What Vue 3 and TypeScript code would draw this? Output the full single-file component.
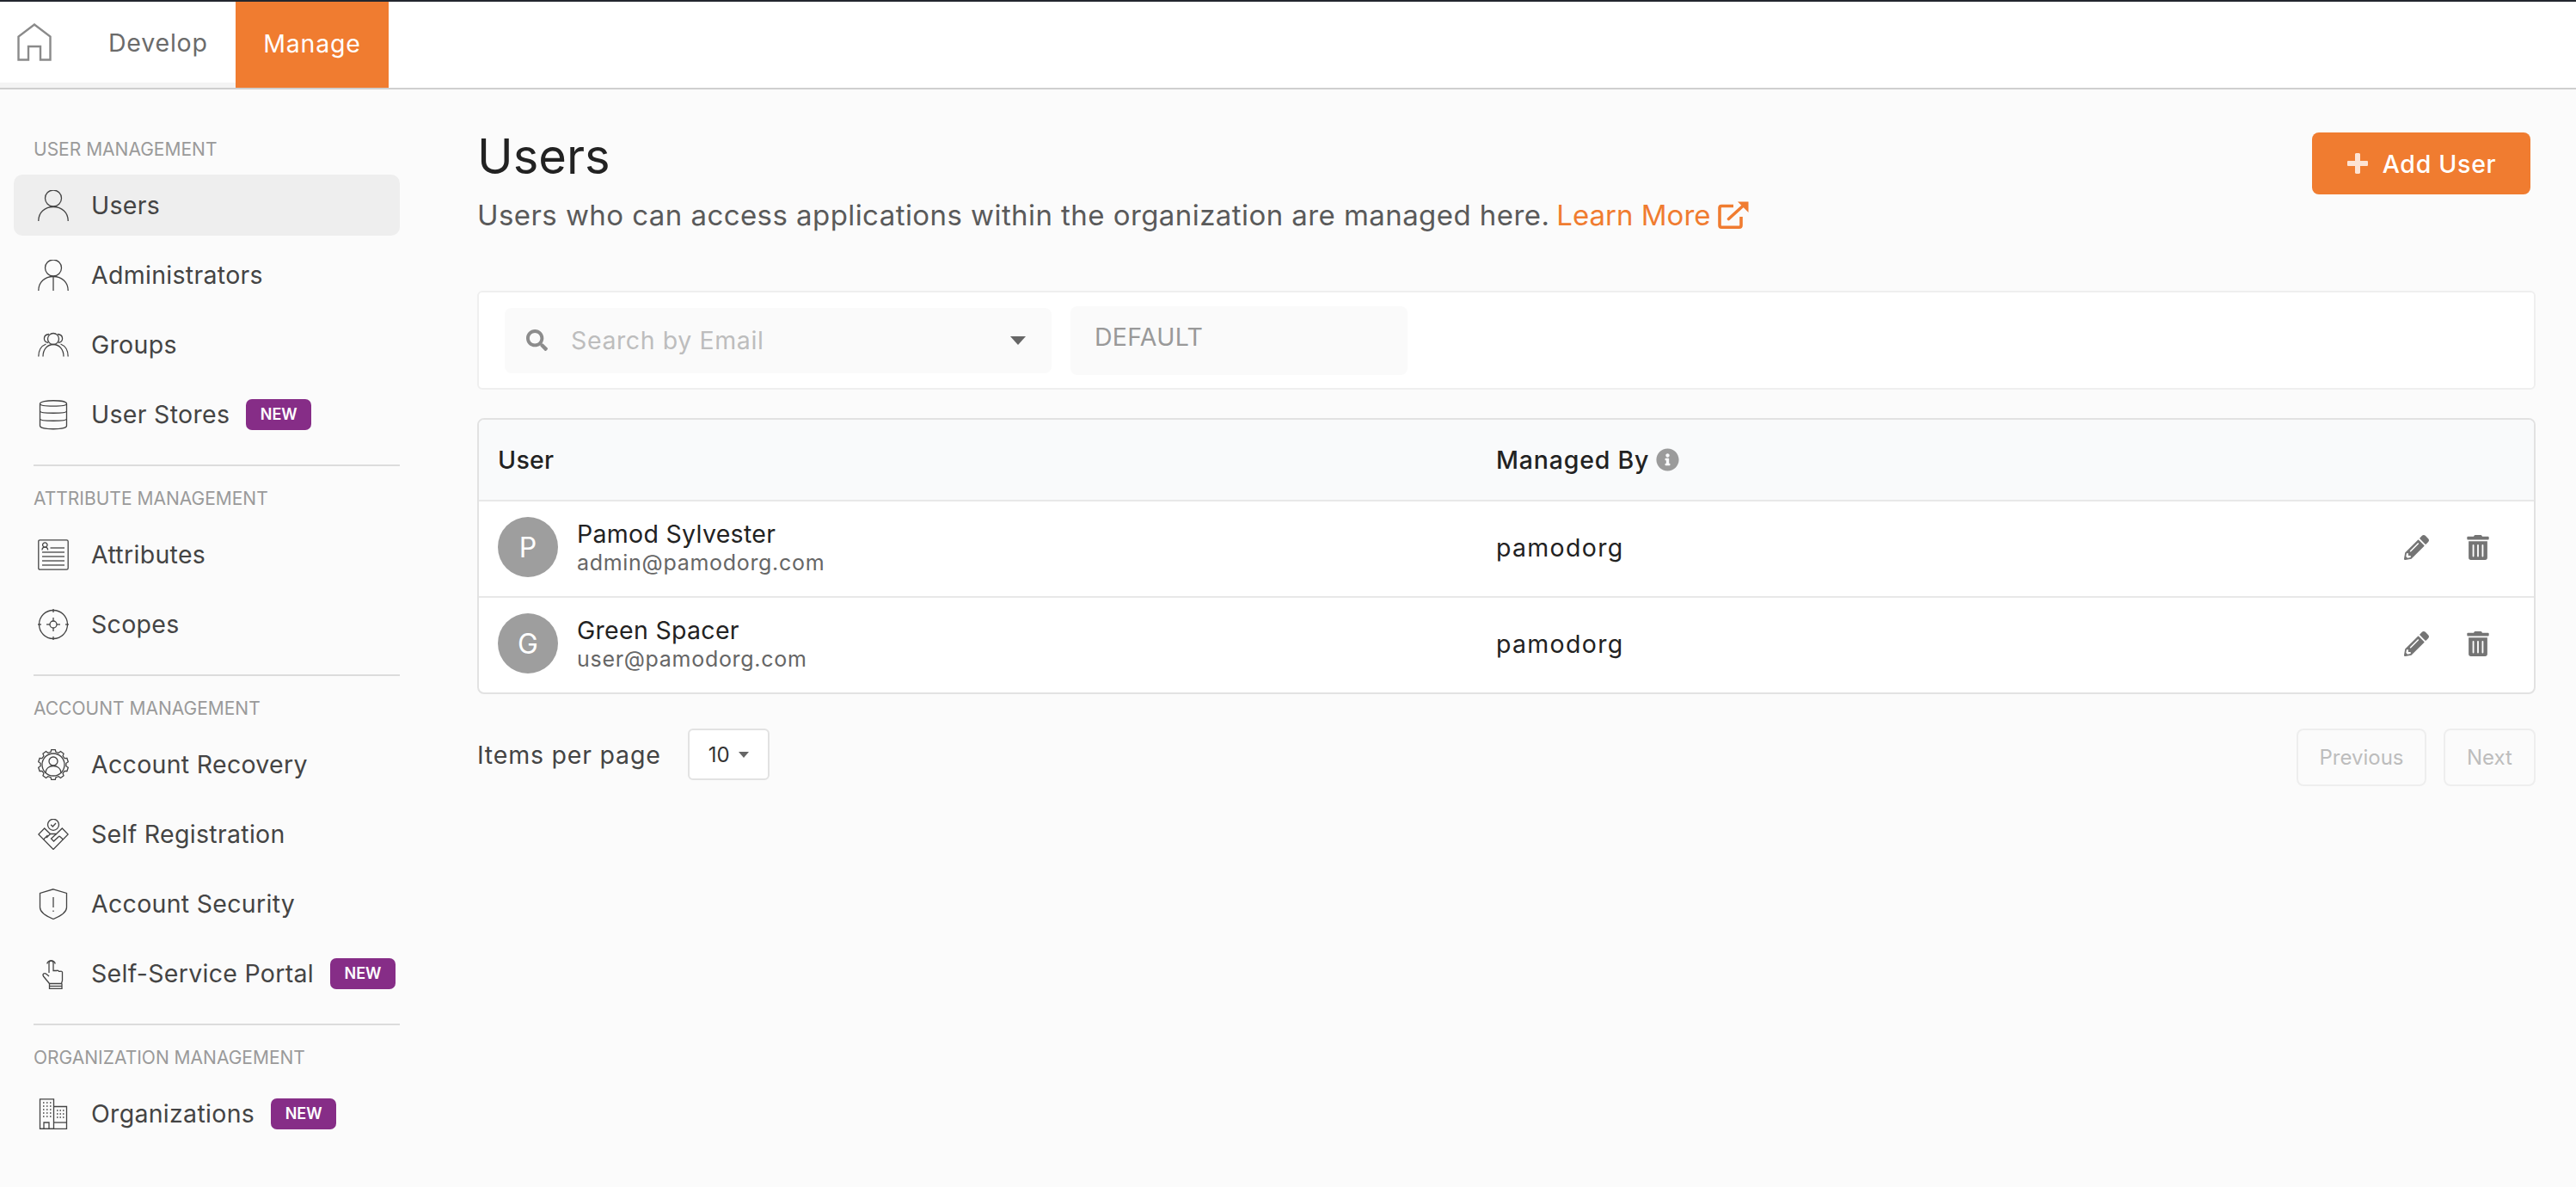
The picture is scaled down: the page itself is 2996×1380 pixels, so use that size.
<script setup lang="ts">
interface NavItem {
  label: string
  icon: string[]
  isNew?: boolean
  active?: boolean
}

interface NavSection {
  title: string
  items: NavItem[]
}

interface UserRow {
  name: string
  email: string
  org: string
}

// cog outline for the account recovery icon
const cogPath = (teeth: number, outer: number, inner: number): string => {
  const step = (Math.PI * 2) / teeth
  const points: string[] = []
  for (let i = 0; i < teeth; i++) {
    const a = i * step - Math.PI / 2
    const offsets: [number, number][] = [
      [-0.32, inner],
      [-0.2, outer],
      [0.2, outer],
      [0.32, inner],
    ]
    for (const [off, r] of offsets) {
      const x = 18 + Math.cos(a + off * step) * r
      const y = 18 + Math.sin(a + off * step) * r
      points.push(`${x.toFixed(2)} ${y.toFixed(2)}`)
    }
  }
  return `M${points.join('L')}Z`
}

const sections: NavSection[] = [
  {
    title: 'USER MANAGEMENT',
    items: [
      {
        label: 'Users',
        active: true,
        icon: ['M27.5 9.5a9.5 9.5 0 1 1-19 0a9.5 9.5 0 1 1 19 0z', 'M.8 36C.8 26 8 19.5 18 19.5S35.2 26 35.2 36'],
      },
      {
        label: 'Administrators',
        icon: ['M27.5 9.5a9.5 9.5 0 1 1-19 0a9.5 9.5 0 1 1 19 0z', 'M.8 36C.8 26 8 19.5 18 19.5S35.2 26 35.2 36', 'M18 19.5V36'],
      },
      {
        label: 'Groups',
        icon: [
          'M24.5 11a6.5 6.5 0 1 1-13 0a6.5 6.5 0 1 1 13 0z',
          'M12 15.5C5.5 14 6 6 13 5.5',
          'M24 15.5C30.5 14 30 6 23 5.5',
          'M6 31.5C6 23 11 17.5 18 17.5S30 23 30 31.5',
          'M.8 31.5C.8 24 4.5 19 9.5 17',
          'M35.2 31.5C35.2 24 31.5 19 26.5 17',
        ],
      },
      {
        label: 'User Stores',
        isNew: true,
        icon: [
          'M2.5 5.5C2.5 .5 33.5 .5 33.5 5.5V31C33.5 36 2.5 36 2.5 31Z',
          'M2.5 5.5C2.5 9 33.5 9 33.5 5.5',
          'M2.5 14C2.5 17 33.5 17 33.5 14',
          'M2.5 23C2.5 26 33.5 26 33.5 23',
        ],
      },
    ],
  },
  {
    title: 'ATTRIBUTE MANAGEMENT',
    items: [
      {
        label: 'Attributes',
        icon: [
          'M2.5.8H33.5Q35.2.8 35.2 2.5V33.5Q35.2 35.2 33.5 35.2H2.5Q.8 35.2.8 33.5V2.5Q.8.8 2.5.8Z',
          'M11 6.5a2.7 2.7 0 1 1-5.4 0a2.7 2.7 0 1 1 5.4 0z',
          'M5 12.5C5 10 6.5 9.2 8.3 9.2S11.6 10 11.6 12.5',
          'M14.5 10H31',
          'M5 15H31',
          'M5 20H31',
          'M5 25H31',
          'M5 30H31',
        ],
      },
      {
        label: 'Scopes',
        icon: [
          'M34.5 18a16.5 16.5 0 1 1-33 0a16.5 16.5 0 1 1 33 0z',
          'M22 18a4 4 0 1 1-8 0a4 4 0 1 1 8 0z',
          'M18 0V4',
          'M18 32V36',
          'M0 18H4',
          'M32 18H36',
          'M18 10V14',
          'M18 22V26',
          'M10 18H14',
          'M22 18H26',
        ],
      },
    ],
  },
  {
    title: 'ACCOUNT MANAGEMENT',
    items: [
      {
        label: 'Account Recovery',
        icon: [
          cogPath(10, 17.6, 15),
          'M31 18a13 13 0 1 1-26 0a13 13 0 1 1 26 0z',
          'M23 14a5 5 0 1 1-10 0a5 5 0 1 1 10 0z',
          'M9 27.5C9 22.5 13 19.5 18 19.5S27 22.5 27 27.5',
        ],
      },
      {
        label: 'Self Registration',
        icon: [
          'M24.5 6.8a6.5 6.5 0 1 1-13 0a6.5 6.5 0 1 1 13 0z',
          'M15.2 6.8L17.3 9L21 5',
          'M7.7 11L.8 18L18 35.5L35.2 18L28.3 11L21.5 17.5H14.5Z',
          'M14.5 17.5L10 22',
          'M21.5 17.5L15.5 23L18.5 26L25 20',
          'M6.5 24L11.5 19',
          'M29.5 24L25 20',
        ],
      },
      {
        label: 'Account Security',
        icon: [
          'M18 .8L33.5 5.5V22Q33.5 29 18 35.5Q2.5 29 2.5 22V5.5Z',
          'M18 10V22',
          'M18 25.5V27',
        ],
      },
      {
        label: 'Self-Service Portal',
        isNew: true,
        icon: [
          'M10.7 6.5a5 5 0 0 1 9.6 0',
          'M13 17V5.5a2.5 2.5 0 0 1 5 0V14.5H22a1.8 1.8 0 0 1 2.5 .8H26a1.8 1.8 0 0 1 2.5 1V26L27.5 29.5H13.5L6.5 21C5 18.5 7.5 16.5 10 18.5L13 21',
          'M13.5 29.5V35.5H28V29.5',
          'M13.5 32.5H28',
        ],
      },
    ],
  },
  {
    title: 'ORGANIZATION MANAGEMENT',
    items: [
      {
        label: 'Organizations',
        isNew: true,
        icon: [
          'M2.5 35.5V.8H18.5V35.5Z',
          'M18.5 9.5H33.5V35.5H2.5',
          'M7 35.5V28H13V35.5',
          'M18.5 28H33.5',
          'M6 5h1.5M10 5h1.5M14 5h1.5M6 9h1.5M10 9h1.5M14 9h1.5M6 13h1.5M10 13h1.5M14 13h1.5M6 17h1.5M10 17h1.5M14 17h1.5M6 21h1.5M10 21h1.5M14 21h1.5',
          'M22 14h1.5M25.5 14h1.5M29 14h1.5M22 18h1.5M25.5 18h1.5M29 18h1.5M22 22h1.5M25.5 22h1.5M29 22h1.5',
        ],
      },
    ],
  },
]

const users: UserRow[] = [
  { name: 'Pamod Sylvester', email: 'admin@pamodorg.com', org: 'pamodorg' },
  { name: 'Green Spacer', email: 'user@pamodorg.com', org: 'pamodorg' },
]
</script>

<template>
  <div class="page">
    <header class="topbar">
      <div class="tabs">
        <div class="home">
          <svg width="40" height="44" viewBox="0 0 40 44" fill="none" stroke="#8a8a8a" stroke-width="2.4">
            <path d="M1.5 42.5V15.5L20 1.5L38.5 15.5V42.5H27V27H13V42.5Z" />
          </svg>
        </div>
        <div class="tab">Develop</div>
      </div>
      <div class="tab tab-active">Manage</div>
    </header>

    <div class="body">
      <aside class="sidebar">
        <section v-for="section in sections" :key="section.title" class="nav-section">
          <div class="nav-title">{{ section.title }}</div>
          <div class="nav-items">
            <div v-for="item in section.items" :key="item.label" class="nav-item" :class="{ active: item.active }">
              <svg class="nav-icon" width="36" height="36" viewBox="0 0 36 36" fill="none" stroke="#444" stroke-width="1.3">
                <path v-for="d in item.icon" :key="d" :d="d" />
              </svg>
              <span>{{ item.label }}</span>
              <span v-if="item.isNew" class="badge">NEW</span>
            </div>
          </div>
        </section>
      </aside>

      <main class="main">
        <div class="page-head">
          <div>
            <h1>Users</h1>
            <p class="subtitle">
              Users who can access applications within the organization are managed here.
              <span class="link">Learn More</span>
              <svg width="36" height="32" viewBox="0 0 36 32" fill="none" stroke="#f07c30" stroke-width="3.6">
                <path d="M27 18V28Q27 30.2 24.8 30.2H4.2Q2 30.2 2 28V7.7Q2 5.5 4.2 5.5H18" />
                <path d="M12.5 20.5L29 5.5" stroke-linecap="round" />
                <path d="M23 .5H35.5V13Z" fill="#f07c30" stroke="none" />
              </svg>
            </p>
          </div>
          <button class="add-btn">
            <svg width="26" height="26" viewBox="0 0 26 26"><path fill="#fde3d4" d="M10 2a2 2 0 0 1 2-1h2a2 2 0 0 1 2 1v8h8a1 1 0 0 1 1 1v4a1 1 0 0 1-1 1h-8v8a2 2 0 0 1-2 1h-2a2 2 0 0 1-2-1v-8H2a1 1 0 0 1-1-1v-4a1 1 0 0 1 1-1h8z" /></svg>
            Add User
          </button>
        </div>

        <div class="filters">
          <div class="search">
            <svg width="25" height="25" viewBox="0 0 512 512"><path fill="#8c8c8c" d="M505 442.7L405.3 343c-4.5-4.5-10.6-7-17-7H372c27.6-35.3 44-79.7 44-128C416 93.1 322.9 0 208 0S0 93.1 0 208s93.1 208 208 208c48.3 0 92.7-16.4 128-44v16.3c0 6.4 2.5 12.5 7 17l99.7 99.7c9.4 9.4 24.6 9.4 33.9 0l28.3-28.3c9.4-9.4 9.4-24.6.1-34zM208 336c-70.7 0-128-57.2-128-128 0-70.7 57.2-128 128-128 70.7 0 128 57.2 128 128 0 70.7-57.2 128-128 128z" /></svg>
            <span class="placeholder">Search by Email</span>
            <span class="caret caret-search"></span>
          </div>
          <div class="scope-box">DEFAULT</div>
        </div>

        <div class="table">
          <div class="row row-head">
            <div class="col-user">User</div>
            <div class="col-org">
              Managed By
              <svg width="27" height="27" viewBox="0 0 512 512"><path fill="#9b9b9b" d="M256 8C119.043 8 8 119.083 8 256c0 136.997 111.043 248 248 248s248-111.003 248-248C504 119.083 392.957 8 256 8zm0 110c23.196 0 42 18.804 42 42s-18.804 42-42 42-42-18.804-42-42 18.804-42 42-42zm56 254c0 6.627-5.373 12-12 12h-88c-6.627 0-12-5.373-12-12v-24c0-6.627 5.373-12 12-12h12v-64h-12c-6.627 0-12-5.373-12-12v-24c0-6.627 5.373-12 12-12h64c6.627 0 12 5.373 12 12v100h12c6.627 0 12 5.373 12 12v24z" /></svg>
            </div>
          </div>
          <div v-for="user in users" :key="user.email" class="row">
            <div class="col-user user-cell">
              <div class="avatar">{{ user.name[0] }}</div>
              <div>
                <div class="user-name">{{ user.name }}</div>
                <div class="user-email">{{ user.email }}</div>
              </div>
            </div>
            <div class="col-org org-name">{{ user.org }}</div>
            <div class="actions">
              <svg width="29" height="29" viewBox="0 0 512 512"><path fill="#747474" d="M497.9 142.1l-46.1 46.1c-4.7 4.7-12.3 4.7-17 0l-111-111c-4.7-4.7-4.7-12.3 0-17l46.1-46.1c18.7-18.7 49.1-18.7 67.9 0l60.1 60.1c18.8 18.7 18.8 49.1 0 67.9zM284.2 99.8L21.6 362.4.4 483.9c-2.9 16.4 11.4 30.6 27.8 27.8l121.5-21.3 262.6-262.6c4.7-4.7 4.7-12.3 0-17l-111-111c-4.8-4.7-12.4-4.7-17.1 0zM124.1 339.9c-5.5-5.5-5.5-14.3 0-19.8l154-154c5.5-5.5 14.3-5.5 19.8 0s5.5 14.3 0 19.8l-154 154c-5.5 5.5-14.3 5.5-19.8 0zM88 424h48v36.3l-64.5 11.3-31.1-31.1L51.7 376H88v48z" /></svg>
              <svg width="26" height="29" viewBox="0 0 448 512"><path fill="#747474" d="M32 464a48 48 0 0 0 48 48h288a48 48 0 0 0 48-48V128H32zm272-256a16 16 0 0 1 32 0v224a16 16 0 0 1-32 0zm-96 0a16 16 0 0 1 32 0v224a16 16 0 0 1-32 0zm-96 0a16 16 0 0 1 32 0v224a16 16 0 0 1-32 0zM432 32H312l-9.4-18.7A24 24 0 0 0 281.1 0H166.8a23.72 23.72 0 0 0-21.4 13.3L136 32H16A16 16 0 0 0 0 48v32a16 16 0 0 0 16 16h416a16 16 0 0 0 16-16V48a16 16 0 0 0-16-16z" /></svg>
            </div>
          </div>
        </div>

        <div class="pager">
          <div class="per-page">
            <span>Items per page</span>
            <div class="per-select">10<span class="caret"></span></div>
          </div>
          <div class="pager-btns">
            <div class="pager-btn prev">Previous</div>
            <div class="pager-btn next">Next</div>
          </div>
        </div>
      </main>
    </div>
  </div>
</template>

<style>
html,
body {
  margin: 0;
  background: #fbfbfb;
}
</style>

<style scoped>
.page {
  width: 2996px;
  height: 1380px;
  overflow: hidden;
  background: #fbfbfb;
  color: #444;
  font-family: Inter, 'Noto Sans', sans-serif;
  font-size: 28.5px;
  letter-spacing: 0.3px;
}

.topbar {
  display: flex;
  height: 104px;
  box-sizing: border-box;
  background: #fff;
  border-top: 2px solid #23272e;
  border-bottom: 2px solid #cfcfcf;
}

.tabs {
  display: flex;
  align-items: center;
  width: 274px;
  box-sizing: border-box;
  padding-left: 20px;
  border-bottom: 6px solid #f4f4f4;
}

.home {
  display: flex;
  width: 106px;
}

.tab {
  color: #6b6b6b;
  letter-spacing: 0.8px;
}

.tab-active {
  display: flex;
  align-items: center;
  justify-content: center;
  width: 178px;
  height: 100px;
  box-sizing: border-box;
  padding-bottom: 3px;
  background: #f07c30;
  color: #fff;
}

.body {
  display: flex;
}

.sidebar {
  width: 490px;
  flex-shrink: 0;
  box-sizing: border-box;
  padding: 55px 25px 0 16px;
}

.nav-section {
  margin-bottom: 23px;
}

.nav-section:not(:last-child)::after {
  content: '';
  display: block;
  height: 2px;
  margin: 23px 0 0 23px;
  background: #dcdcdc;
}

.nav-title {
  height: 30px;
  line-height: 30px;
  margin-bottom: 14px;
  padding-left: 23px;
  font-size: 21px;
  letter-spacing: 0;
  color: #9a9a9a;
}

.nav-items {
  display: flex;
  flex-direction: column;
  gap: 10px;
}

.nav-item {
  display: flex;
  align-items: center;
  height: 71px;
  padding-left: 28px;
  border-radius: 10px;
  color: #444;
}

.nav-item.active {
  background: #eeeeee;
}

.nav-icon {
  margin-right: 26px;
  flex-shrink: 0;
}

.badge {
  display: flex;
  align-items: center;
  justify-content: center;
  width: 76px;
  height: 36px;
  margin-left: 19px;
  border-radius: 7px;
  background: #862d87;
  color: #fff;
  font-size: 18px;
  font-weight: 600;
  letter-spacing: 0;
}

.main {
  flex: 1;
  box-sizing: border-box;
  padding: 48px 47px 0 65px;
}

.page-head {
  display: flex;
  justify-content: space-between;
  align-items: flex-start;
  height: 186px;
}

h1 {
  margin: 0;
  height: 60px;
  line-height: 60px;
  font-size: 56px;
  font-weight: 400;
  letter-spacing: 0;
  color: #222;
}

.subtitle {
  display: flex;
  align-items: center;
  gap: 8px;
  margin: 18px 0 0;
  font-size: 33px;
  letter-spacing: 0.43px;
  color: #5a5a5a;
}

.link {
  letter-spacing: 0;
  color: #f07c30;
}

.add-btn {
  display: flex;
  align-items: center;
  justify-content: center;
  gap: 16px;
  width: 254px;
  height: 72px;
  margin: 2px 6px 0 0;
  padding: 0;
  border: none;
  border-radius: 8px;
  background: #f07c30;
  color: #fff;
  font: inherit;
  font-weight: 500;
  letter-spacing: 0.7px;
}

.filters {
  display: flex;
  align-items: center;
  gap: 22px;
  height: 115px;
  box-sizing: border-box;
  padding-left: 30px;
  border: 2px solid #efefef;
  border-radius: 6px;
  background: #fff;
}

.search {
  display: flex;
  align-items: center;
  width: 636px;
  height: 76px;
  box-sizing: border-box;
  padding: 0 30px 0 25px;
  border-radius: 8px;
  background: #fafafa;
}

.placeholder {
  flex: 1;
  margin-left: 27px;
  letter-spacing: 0.6px;
  color: #bdbdbd;
}

.caret {
  display: inline-block;
  width: 0;
  height: 0;
  border-left: 6px solid transparent;
  border-right: 6px solid transparent;
  border-top: 7px solid #666;
}

.caret-search {
  border-left-width: 9px;
  border-right-width: 9px;
  border-top-width: 10px;
}

.scope-box {
  width: 392px;
  height: 80px;
  box-sizing: border-box;
  padding: 18px 28px 0;
  border-radius: 8px;
  background: #fafafa;
  color: #999;
}

.table {
  margin-top: 33px;
  border: 2px solid #e2e2e2;
  border-radius: 8px;
  background: #fff;
  overflow: hidden;
}

.row {
  display: flex;
  align-items: center;
  height: 112px;
  box-sizing: border-box;
  padding-bottom: 4px;
  border-top: 2px solid #e8e8e8;
}

.row-head {
  height: 93px;
  padding-bottom: 0;
  border-top: none;
  background: #f9fafb;
  color: #222;
  font-weight: 500;
}

.col-user {
  width: 1183px;
  box-sizing: border-box;
  padding-left: 22px;
}

.col-org {
  display: flex;
  align-items: center;
  gap: 8px;
  flex: 1;
  letter-spacing: 0.8px;
  color: #222;
}

.org-name {
  letter-spacing: 1.3px;
}

.user-cell {
  display: flex;
  align-items: center;
  gap: 22px;
}

.avatar {
  display: flex;
  align-items: center;
  justify-content: center;
  width: 70px;
  height: 70px;
  border-radius: 50%;
  background: #9e9e9e;
  color: #fff;
  font-size: 32px;
}

.user-name {
  color: #222;
  line-height: 36px;
}

.user-email {
  color: #666;
  font-size: 25px;
  letter-spacing: 0.7px;
  line-height: 30px;
}

.actions {
  display: flex;
  align-items: center;
  gap: 44px;
  padding-right: 52px;
}

.pager {
  display: flex;
  justify-content: space-between;
  margin-top: 40px;
}

.per-page {
  display: flex;
  align-items: center;
  gap: 31px;
  height: 60px;
  letter-spacing: 0.8px;
}

.per-select {
  display: flex;
  align-items: center;
  justify-content: center;
  gap: 10px;
  width: 95px;
  height: 60px;
  box-sizing: border-box;
  border: 2px solid #e2e2e2;
  border-radius: 6px;
  background: #fff;
  color: #333;
  font-size: 24px;
  letter-spacing: 0;
}

.pager-btns {
  display: flex;
  gap: 20px;
}

.pager-btn {
  display: flex;
  align-items: center;
  justify-content: center;
  height: 67px;
  box-sizing: border-box;
  border: 2px solid #eee;
  border-radius: 8px;
  color: #bdbdbd;
  font-size: 24px;
  letter-spacing: 0;
}

.prev {
  width: 151px;
}

.next {
  width: 107px;
}
</style>
